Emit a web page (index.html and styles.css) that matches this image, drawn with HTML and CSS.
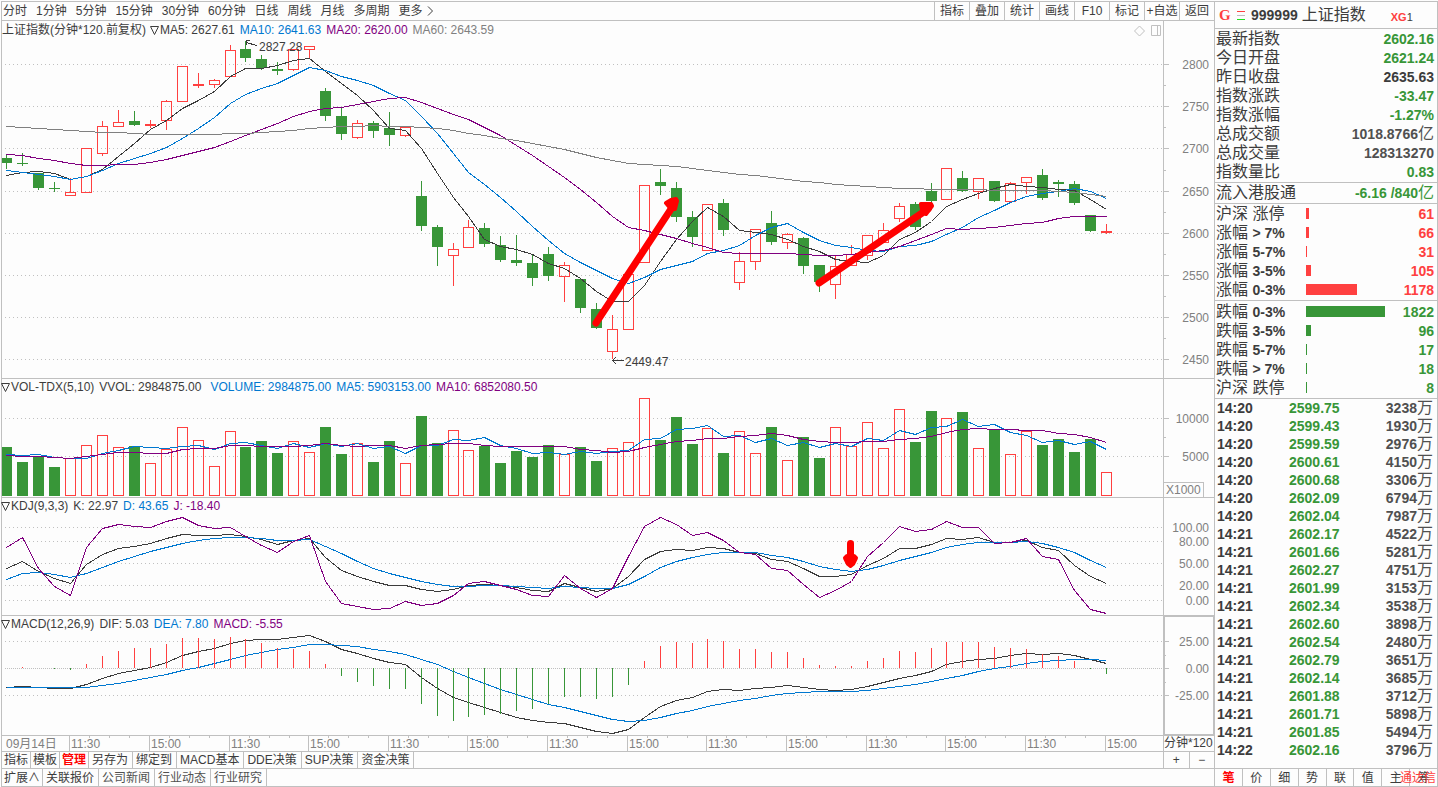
FILE: index.html
```html
<!DOCTYPE html>
<html lang="zh-CN">
<head>
<meta charset="utf-8">
<title>上证指数 999999</title>
<link rel="stylesheet" href="styles.css">
</head>
<body>
<main class="workspace">
  <nav class="toolbar">
    <div class="periods">
      <button>分时</button><button>1分钟</button><button>5分钟</button><button>15分钟</button><button>30分钟</button><button>60分钟</button><button>日线</button><button>周线</button><button>月线</button><button>多周期</button><button class="more">更多<svg width="7" height="10" viewBox="0 0 7 10"><path d="M1 0.500L5.500 5L1 9.500" /></svg></button>
    </div>
    <div class="tools">
      <button>指标</button><button>叠加</button><button>统计</button><button>画线</button><button>F10</button><button>标记</button><button>+自选</button><button>返回</button>
    </div>
  </nav>

  <section class="pane pane-price">
    <div class="plot">
      <svg class="canvas" id="price" viewBox="2 21 1161 357" preserveAspectRatio="none"></svg>
      <div class="legend"><span>上证指数(分钟*120.前复权)</span><svg class="tri" width="9" height="9" viewBox="0 0 9 9"><path d="M0.500 0.500H8.500L4.500 8.500Z"/></svg><span>MA5: 2627.61</span><span class="blue">MA10: 2641.63</span><span class="purple">MA20: 2620.00</span><span class="gray">MA60: 2643.59</span></div>
      <svg class="corner" width="27" height="12" viewBox="0 0 27 12"><path d="M5.500 1L10.500 6L5.500 11L0.500 6Z"/><path d="M17.500 0.500h9v10h-9zM23.500 0.500v10"/></svg>
    </div>
    <div class="axis" id="price-axis"></div>
  </section>

  <section class="pane pane-volume">
    <div class="plot">
      <svg class="canvas" id="volume" viewBox="2 379 1161 118" preserveAspectRatio="none"></svg>
      <div class="legend"><svg class="tri" width="9" height="9" viewBox="0 0 9 9"><path d="M0.500 0.500H8.500L4.500 8.500Z"/></svg><span>VOL-TDX(5,10)</span><span>VVOL: 2984875.00</span><span class="blue wide">VOLUME: 2984875.00</span><span class="blue">MA5: 5903153.00</span><span class="purple">MA10: 6852080.50</span></div>
    </div>
    <div class="axis" id="volume-axis"><span class="unit">X1000</span></div>
  </section>

  <section class="pane pane-kdj">
    <div class="plot">
      <svg class="canvas" id="kdj" viewBox="2 498 1161 117" preserveAspectRatio="none"></svg>
      <div class="legend"><svg class="tri" width="9" height="9" viewBox="0 0 9 9"><path d="M0.500 0.500H8.500L4.500 8.500Z"/></svg><span>KDJ(9,3,3)</span><span>K: 22.97</span><span class="blue">D: 43.65</span><span class="purple">J: -18.40</span></div>
    </div>
    <div class="axis" id="kdj-axis"></div>
  </section>

  <section class="pane pane-macd">
    <div class="plot">
      <svg class="canvas" id="macd" viewBox="2 616 1161 119" preserveAspectRatio="none"></svg>
      <div class="legend"><svg class="tri" width="9" height="9" viewBox="0 0 9 9"><path d="M0.500 0.500H8.500L4.500 8.500Z"/></svg><span>MACD(12,26,9)</span><span>DIF: 5.03</span><span class="blue">DEA: 7.80</span><span class="purple">MACD: -5.55</span></div>
    </div>
    <div class="axis selected" id="macd-axis"></div>
  </section>

  <div class="timeline">
    <div class="times" id="times"></div>
    <div class="scale">分钟*120</div>
  </div>

  <div class="tabs">
    <button class="tight">指标</button><button class="tight">模板</button><button class="tight on">管理</button><button>另存为</button><button>绑定到</button><button>MACD基本</button><button>DDE决策</button><button>SUP决策</button><button>资金决策</button>
    <div class="zoomer"><button aria-label="放大">+</button><button aria-label="缩小">−</button></div>
  </div>
  <div class="tabs links">
    <button class="tight">扩展∧</button><button>关联报价</button><button class="soft">公司新闻</button><button class="soft">行业动态</button><button class="soft">行业研究</button>
  </div>
</main>

<aside class="quote">
  <header class="head">
    <b class="g">G</b>
    <svg class="bars" width="8" height="9" viewBox="0 0 8 9"><path class="b1" d="M0 0.500H8"/><path class="b2" d="M0 4.500H8"/><path class="b3" d="M0 8.500H8"/></svg>
    <b>999999</b><span class="name">上证指数</span><span class="xg"><b>XG</b>1</span>
  </header>
  <dl class="facts">
    <div><dt>最新指数</dt><dd class="down">2602.16</dd></div>
    <div><dt>今日开盘</dt><dd class="down">2621.24</dd></div>
    <div><dt>昨日收盘</dt><dd>2635.63</dd></div>
    <div><dt>指数涨跌</dt><dd class="down">-33.47</dd></div>
    <div><dt>指数涨幅</dt><dd class="down">-1.27%</dd></div>
    <div><dt>总成交额</dt><dd class="mid">1018.8766<i>亿</i></dd></div>
    <div><dt>总成交量</dt><dd class="mid">128313270</dd></div>
    <div><dt>指数量比</dt><dd class="down">0.83</dd></div>
  </dl>
  <dl class="facts flow">
    <div><dt>流入港股通</dt><dd class="down">-6.16 /840<i>亿</i></dd></div>
  </dl>
  <dl class="facts spread rise" id="rise"></dl>
  <dl class="facts spread fall" id="fall"></dl>
  <table class="ticks"><tbody id="ticks"></tbody></table>
  <nav class="views">
    <button class="on">笔</button><button>价</button><button>细</button><button>势</button><button>联</button><button>值</button><button>主</button><button>筹</button>
    <span class="brand">通达信</span>
  </nav>
</aside>
<script src="app.js"></script>
</body>
</html>
```

FILE: styles.css
```css
:root {
  --line: #c0c0c0;
  --ink: #3c3c3c;
  --gray: #808080;
  --green: #389638;
  --red: #ff4040;
  --blue: #0078d0;
  --purple: #800080;
  --bg: #fdfdfd;
}
* { box-sizing: border-box; }
body {
  margin: 0;
  height: 100vh;
  padding: 1px 0 0 1px;
  display: grid;
  grid-template-columns: minmax(0, 1fr) 224px;
  background: var(--bg);
  color: var(--ink);
  font: 12px/14px "Liberation Sans", "Noto Sans CJK SC", sans-serif;
  overflow: hidden;
  white-space: nowrap;
}
button {
  margin: 0;
  padding: 0;
  border: 0;
  background: none;
  color: inherit;
  font: inherit;
  cursor: pointer;
}
svg { fill: none; }
.canvas, .bars { shape-rendering: crispEdges; }
.blue { color: var(--blue); }
.purple { color: var(--purple); }
.gray { color: var(--gray); }

.workspace {
  display: flex;
  flex-direction: column;
  min-height: 0;
  border-left: 1px solid var(--line);
}
.toolbar {
  flex: 0 0 20px;
  display: flex;
  justify-content: space-between;
  border-top: 1px solid var(--line);
  border-bottom: 1px solid var(--line);
}
.periods { display: flex; gap: 9px; padding-left: 1px; }
.more { display: flex; align-items: center; gap: 4px; }
.more svg { stroke: var(--ink); }
.tools { display: flex; }
.tools button { width: 35px; border-left: 1px solid var(--line); }

.pane {
  display: grid;
  grid-template-columns: minmax(0, 1fr) 51px;
  min-height: 0;
  border-bottom: 1px solid var(--line);
}
.pane-price { flex: 357 1 0; }
.pane-volume { flex: 118 1 0; }
.pane-kdj { flex: 117 1 0; }
.pane-macd { flex: 119 1 0; }
.plot { position: relative; }
.canvas { position: absolute; inset: 0; width: 100%; height: 100%; overflow: hidden; }
.legend { position: relative; display: flex; align-items: center; gap: 5px; padding-top: 1px; }
.pane-price .legend { padding-top: 2px; }
.legend .tri { stroke: var(--ink); margin: 0 -4px 0 -1px; }
.legend .wide { margin-left: 4px; }
.corner { position: absolute; right: 2px; top: 4px; stroke: var(--line); }
.axis { position: relative; border-left: 1px solid var(--line); color: var(--gray); }
.axis.selected { box-shadow: inset 0 0 0 1px var(--line); }
.axis .label { position: absolute; right: 5px; transform: translateY(-50%); }
.axis .tick { position: absolute; left: 0; width: 5px; height: 1px; background: var(--line); }
.axis .tick.minor { width: 2px; }
.axis .unit {
  position: absolute;
  left: 0;
  bottom: 0;
  width: 40px;
  padding-left: 2px;
  border-top: 1px solid var(--line);
  border-right: 1px solid var(--line);
}

.grid { stroke: var(--line); stroke-dasharray: 1 3; }
.grid.dense { stroke-dasharray: 1 1; }
.up-body { stroke: var(--red); }
.up-wick { stroke: var(--red); }
.down-body { fill: var(--green); }
.down-wick { stroke: var(--green); }
.s-ink { stroke: var(--ink); }
.s-blue { stroke: var(--blue); }
.s-purple { stroke: var(--purple); }
.s-gray { stroke: var(--gray); }
.note { fill: var(--ink); font-size: 12px; }
.mark { stroke: #ff0000; stroke-width: 7; stroke-linecap: round; shape-rendering: auto; }
.mark-head { fill: #ff0000; stroke: #ff0000; stroke-width: 4; stroke-linejoin: round; shape-rendering: auto; }

.timeline {
  flex: 0 0 16px;
  display: grid;
  grid-template-columns: minmax(0, 1fr) 51px;
  border-bottom: 1px solid var(--line);
}
.times { position: relative; color: var(--gray); }
.times span { position: absolute; top: 0; height: 15px; line-height: 16px; padding-left: 1px; border-left: 1px solid var(--line); }
.times .first { border: 0; }
.times i { position: absolute; top: 0; width: 1px; height: 2px; background: var(--line); }
.scale { border-left: 1px solid var(--line); }

.tabs { flex: 0 0 17px; display: flex; border-bottom: 1px solid var(--line); }
.tabs.links { flex-basis: 18px; }
.tabs button { padding: 0 4px 0 3px; border-right: 1px solid var(--line); }
.tabs .tight { padding: 0 2px; }
.tabs .on { color: #ff0000; font-weight: bold; }
.tabs .soft { color: #505050; }
.zoomer { margin-left: auto; width: 51px; display: flex; border-left: 1px solid var(--line); }
.tabs .zoomer button { flex: 1; padding: 0; }
.tabs .zoomer button:last-child { border-right: 0; }

.quote {
  display: flex;
  flex-direction: column;
  min-height: 0;
  border: 1px solid var(--line);
  font-size: 14px;
}
.head { flex: 0 0 27px; display: flex; align-items: center; padding-left: 4px; border-bottom: 1px solid var(--line); }
.g { width: 18px; color: var(--red); font: bold 15px "Liberation Serif", serif; }
.bars { margin-right: 6px; }
.b1 { stroke: #ff4040; }
.b2 { stroke: #c0c0c0; }
.b3 { stroke: #20e020; }
.name { margin-left: 4px; font-size: 16px; }
.xg { margin-left: 25px; padding-top: 4px; font-size: 11px; }
.xg b { color: var(--red); }
.facts { margin: 0; padding-bottom: 1px; border-bottom: 1px solid var(--line); }
.facts div { display: flex; align-items: center; height: 19px; padding: 0 3px 0 1px; }
.facts dt { font-size: 16px; }
.facts dt b { font-size: 14px; }
.facts dd { margin: 0 0 0 auto; font-weight: bold; }
.facts i, .ticks i { font-size: 16px; font-style: normal; font-weight: normal; }
.facts.fall { padding-top: 1px; }
.spread dt { width: 90px; }
.spread .bar { height: 11px; background: currentColor; }
.rise .bar, .rise dd { color: var(--red); }
.fall .bar, .fall dd { color: var(--green); }
.down { color: var(--green); }
.mid { color: #505050; }
.ticks { width: 100%; border-collapse: collapse; font-weight: bold; }
.ticks td { height: 18px; padding: 0; line-height: 18px; }
.ticks td:nth-child(1) { width: 74px; padding-left: 2px; }
.ticks td:nth-child(2) { color: var(--green); }
.ticks td:nth-child(3) { color: #505050; text-align: right; padding-right: 4px; }
.views { position: relative; margin-top: auto; flex: 0 0 18px; display: flex; font-size: 12px; border-top: 1px solid var(--line); }
.views button { flex: 1 1 0; border-right: 1px solid var(--line); }
.views button:last-of-type { border-right: 0; }
.views .on { color: #ff0000; font-weight: bold; }
.brand { position: absolute; right: 1px; top: 2px; color: var(--red); }
```

FILE: app.js
```js
// Chart geometry is kept in one shared canvas space; each pane shows its own slice of it.
const COUNT = 70;
const xAt = i => 6 + 16 * i - (i >= 15) - (i >= 29) - (i >= 44) - (i >= 59);

// direction, high, body top, body bottom, low
const candles = `g 155 158 163 169|g 153 163 164 166|g 173 173 188 190|g 182 188 189 192|r 178 192 196 196|r 148 148 193 193|r 121 126 154 156|r 110 122 127 127|g 111 121 125 126|r 120 124 126 128|r 100 101 121 130|r 66 66 102 102|r 73 84 86 88|r 79 80 85 88|r 45 50 77 77|g 41 49 58 62|g 55 59 68 70|g 62 69 71 75|r 49 49 70 71|r 46 46 50 59|g 88 91 116 121|g 108 116 134 140|r 120 123 138 139|g 121 123 131 138|g 112 128 135 146|r 127 127 136 137|g 181 196 226 231|g 225 227 247 266|r 243 249 256 286|r 220 227 248 248|g 223 228 244 247|g 236 245 260 262|g 235 260 263 266|g 255 263 278 286|g 247 254 276 281|r 262 265 277 302|g 279 279 308 313|g 303 309 328 329|r 315 329 352 359|r 274 274 330 330|r 185 185 263 263|g 169 182 186 195|g 182 188 217 222|g 211 217 237 247|r 204 204 251 251|g 199 203 230 236|r 252 261 283 290|r 229 229 262 270|g 211 223 242 245|r 233 234 243 249|g 237 238 266 274|g 265 265 282 292|r 255 266 285 299|r 245 254 266 266|r 235 235 256 260|r 223 230 243 243|r 203 206 219 222|g 202 204 227 230|g 183 191 201 210|r 168 168 200 200|g 171 178 191 192|r 178 178 192 199|g 181 181 201 202|r 182 183 202 202|r 177 177 183 194|g 169 175 198 200|g 180 182 184 197|g 181 184 203 205|g 215 215 231 232|r 224 231 233 234`
  .split('|').map(s => { const [d, ...v] = s.split(' '); return [d, ...v.map(Number)]; });

const ma5 = [175,172,171,173,179,176,169,156,143,129,120,108,100,91,76,68,68,65,60,58,71,83,95,110,128,130,148,173,197,216,239,246,249,254,263,268,278,291,301,301,285,261,239,221,207,216,230,232,234,239,246,251,259,261,262,255,239,232,221,206,199,193,188,184,186,187,189,190,199,209];
const ma10 = [170,172,174,176,179,176,170,163,158,153,147,138,128,117,103,94,88,83,75,67,70,76,80,85,93,100,116,133,153,172,184,197,211,226,240,253,262,270,278,283,277,269,265,261,253,250,245,235,227,223,232,240,245,247,250,251,246,245,241,234,227,217,210,202,196,193,191,188,191,198];
const ma20 = [154,155,158,160,163,165,165,164,164,162,159,155,151,147,141,135,129,123,116,111,108,107,104,101,98,97,102,108,114,119,127,135,145,155,166,177,189,202,216,227,230,234,238,243,247,252,253,253,253,253,254,255,255,254,252,250,246,240,234,228,229,228,227,225,223,222,218,216,216,216];
const ma60 = [126,127,128,129,130,131,132,132,133,134,134,134,134,134,133,133,132,131,130,128,127,126,126,125,126,126,127,128,130,133,135,138,140,143,146,149,153,157,160,163,164,165,166,168,170,172,174,175,177,179,181,182,184,185,186,187,188,188,189,189,189,189,190,190,190,190,191,192,194,196];

const volTop = [447,462,456,467,458,445,435,447,446,463,449,427,440,466,431,447,441,453,441,452,427,454,443,462,441,463,416,443,430,450,446,463,451,457,445,454,447,461,448,442,398,440,417,444,428,453,431,453,427,460,437,458,427,446,422,448,409,442,411,418,412,448,429,454,431,445,439,452,439,472];
const vol5 = [454,455,454,457,458,458,453,450,446,447,448,446,445,449,443,442,445,448,443,447,443,446,443,448,446,453,445,445,439,440,437,445,448,453,452,454,451,453,451,450,439,438,429,428,425,436,435,442,438,445,442,447,443,446,438,440,430,434,427,426,419,426,424,432,435,442,440,444,441,449];
const vol10 = [455,456,456,457,458,456,454,452,452,453,453,449,448,448,445,445,446,446,446,445,443,445,446,445,445,448,445,444,443,443,445,446,446,446,446,446,449,450,452,451,447,444,441,440,438,438,436,435,433,435,439,441,442,442,441,441,439,438,436,432,429,428,429,429,430,430,433,434,437,442];

const jLine = [547,537,568,586,595,547,528,524,526,527,521,517,525,528,527,536,545,552,541,535,581,603,606,609,608,601,605,603,595,583,581,585,589,595,596,575,588,597,588,556,526,517,524,535,532,540,552,554,568,570,584,597,590,581,556,542,526,531,529,521,527,527,543,542,538,556,559,590,609,613];
const kLine = [568,561,571,578,583,564,554,548,546,543,538,534,535,535,534,536,539,544,540,538,557,570,576,581,585,585,589,591,589,585,584,585,587,590,591,583,587,591,588,576,559,551,549,550,547,548,552,553,559,561,568,576,576,574,565,558,548,548,544,538,539,537,542,542,540,547,550,565,576,583];
const dLine = [579,573,572,574,577,573,567,561,556,551,547,543,540,538,537,537,538,540,540,539,546,553,561,568,573,577,581,584,586,586,585,585,586,587,588,586,587,588,588,584,576,567,561,557,554,552,552,552,555,557,561,566,569,571,569,565,560,556,552,547,544,542,542,542,541,543,547,552,560,567];

const hist = [668,667,668,669,670,664,656,651,648,648,644,638,638,639,637,639,643,648,649,651,664,676,682,686,689,689,704,716,721,717,715,714,711,709,704,697,697,699,697,685,661,646,642,643,639,641,649,649,652,652,658,665,666,666,661,658,651,652,648,642,642,642,647,648,649,654,656,661,669,674];
const dif = [687,686,687,688,688,684,678,673,670,667,662,655,651,648,643,640,639,639,637,635,641,649,653,658,662,664,677,688,697,702,707,712,717,720,722,723,727,731,733,729,717,706,700,697,691,689,690,688,687,685,687,689,690,689,686,682,678,675,671,664,661,659,658,655,653,654,653,655,659,663];
const dea = [687,687,687,687,687,687,685,683,680,677,674,670,667,663,659,655,652,649,647,644,644,645,646,649,651,654,659,664,671,677,683,689,694,699,704,707,711,715,719,721,720,717,713,710,706,703,700,698,695,693,692,691,691,691,690,688,686,684,681,678,675,671,668,666,663,661,660,659,659,660];

const line = (ys, cls) => `<polyline class="${cls}" points="${ys.map((y, i) => `${xAt(i) + 0.5},${y + 0.5}`).join(' ')}"/>`;
const grid = (ys, dense) => ys.map(y => `<path class="grid${y === dense ? ' dense' : ''}" d="M5 ${y + 0.5}H1162"/>`).join('');
const box = (up, x, top, bottom) => up
  ? `<rect class="up-body" x="${x - 4.5}" y="${top + 0.5}" width="10" height="${Math.max(bottom - top - 1, 1)}"/>`
  : `<rect class="down-body" x="${x - 5}" y="${top}" width="11" height="${bottom - top}"/>`;

function candle([d, hi, top, bottom, lo], i) {
  const x = xAt(i), up = d === 'r', cls = up ? 'up-wick' : 'down-wick';
  const wick = (a, b) => b > a ? `<path class="${cls}" d="M${x + 0.5} ${a}V${b}"/>` : '';
  return wick(hi, top) + wick(bottom, lo) + box(up, x, top, bottom);
}

document.getElementById('price').innerHTML =
  grid([64, 106, 148, 191, 233, 275, 317, 359]) + candles.map(candle).join('') +
  line(ma5, 's-ink') + line(ma10, 's-blue') + line(ma20, 's-purple') + line(ma60, 's-gray') +
  `<path class="s-ink" d="M257 45.500L246 42.500M250 40.500H246.500V45"/><text class="note" x="259" y="51">2827.28</text>
   <path class="s-ink" d="M612 360.500H624M616 357L612.500 360.500L616 364"/><text class="note" x="625" y="366">2449.47</text>
   <path class="mark" d="M596 323L673 206M819 283L928 209"/>
   <path class="mark-head" d="M666 203L671 200L676 199L677 201L675 209L671 209ZM921 204H931L932 206L926 214L922 210Z"/>`;

document.getElementById('volume').innerHTML =
  grid([418, 456]) + volTop.map((y, i) => box(candles[i][0] === 'r', xAt(i), y, 496)).join('') +
  line(vol5, 's-blue') + line(vol10, 's-purple');

document.getElementById('kdj').innerHTML =
  grid([527, 541, 563, 585, 600]) + line(kLine, 's-ink') + line(dLine, 's-blue') + line(jLine, 's-purple') +
  `<path class="mark" d="M850.500 543.500V558"/><path class="mark-head" d="M847 556H854L856 558L853 564L850.500 566L848 564L845 558Z"/>`;

document.getElementById('macd').innerHTML =
  grid([641, 668, 695], 668) +
  line(dif, 's-ink') + line(dea, 's-blue') +
  hist.map((y, i) => y === 668 ? '' : `<path class="${y < 668 ? 'up-wick' : 'down-wick'}" d="M${xAt(i) + 0.5} 668V${y}"/>`).join('');

function axis(id, start, height, labels, minor = [], ticks = true) {
  const pct = y => `${(y - start) / height * 100}%`;
  const html = labels.map(([y, t]) =>
    `${ticks ? `<i class="tick" style="top:${pct(y)}"></i>` : ''}<span class="label" style="top:${pct(y + 1)}">${t}</span>`).join('') +
    minor.map(y => `<i class="tick minor" style="top:${pct(y)}"></i>`).join('');
  document.getElementById(id).insertAdjacentHTML('beforeend', html);
}
axis('price-axis', 21, 357, [[64, 2800], [106, 2750], [148, 2700], [191, 2650], [233, 2600], [275, 2550], [317, 2500], [359, 2450]], [85, 127, 170, 212, 254, 296, 338]);
axis('volume-axis', 379, 118, [[418, 10000], [456, 5000]], [437]);
axis('kdj-axis', 498, 117, [[527, '100.00'], [541, '80.00'], [563, '50.00'], [585, '20.00'], [600, '0.00']], [], false);
axis('macd-axis', 616, 119, [[641, '25.00'], [668, '0.00'], [695, '-25.00']], [655, 682]);

let times = `<span class="first" style="left:${3 / 1161 * 100}%">09月14日</span>`;
for (let n = 0; n < COUNT / 5; n++) {
  const x = xAt(4 + 5 * n) - 1;
  times += `<span style="left:${(x - 2) / 1161 * 100}%">${n % 2 ? '15:00' : '11:30'}</span>`;
  if (n < 13) for (let k = 1; k < 4; k++) times += `<i style="left:${(x + 20 * k - 2) / 1161 * 100}%"></i>`;
}
document.getElementById('times').innerHTML = times;

const spread = (id, rows) => {
  document.getElementById(id).innerHTML = rows.map(([label, range, width, value]) =>
    `<div><dt>${label}${range ? ` <b>${range}</b>` : ''}</dt><span class="bar" style="width:${width}px"></span><dd>${value}</dd></div>`).join('');
};
spread('rise', [['沪深 涨停', '', 3, 61], ['涨幅', '&gt; 7%', 3, 66], ['涨幅', '5-7%', 1, 31], ['涨幅', '3-5%', 5, 105], ['涨幅', '0-3%', 51, 1178]]);
spread('fall', [['跌幅', '0-3%', 79, 1822], ['跌幅', '3-5%', 5, 96], ['跌幅', '5-7%', 1, 17], ['跌幅', '&gt; 7%', 1, 18], ['沪深 跌停', '', 1, 8]]);

const trades = [['14:20','2599.75',3238],['14:20','2599.43',1930],['14:20','2599.59',2976],['14:20','2600.61',4150],['14:20','2600.68',3306],['14:20','2602.09',6794],['14:20','2602.04',7987],['14:21','2602.17',4522],['14:21','2601.66',5281],['14:21','2602.27',4751],['14:21','2601.99',3153],['14:21','2602.34',3538],['14:21','2602.60',3898],['14:21','2602.54',2480],['14:21','2602.79',3651],['14:21','2602.14',3685],['14:21','2601.88',3712],['14:21','2601.71',5898],['14:21','2601.85',5494],['14:22','2602.16',3796]];
document.getElementById('ticks').innerHTML = trades.map(([t, p, v]) => `<tr><td>${t}</td><td>${p}</td><td>${v}<i>万</i></td></tr>`).join('');
```
